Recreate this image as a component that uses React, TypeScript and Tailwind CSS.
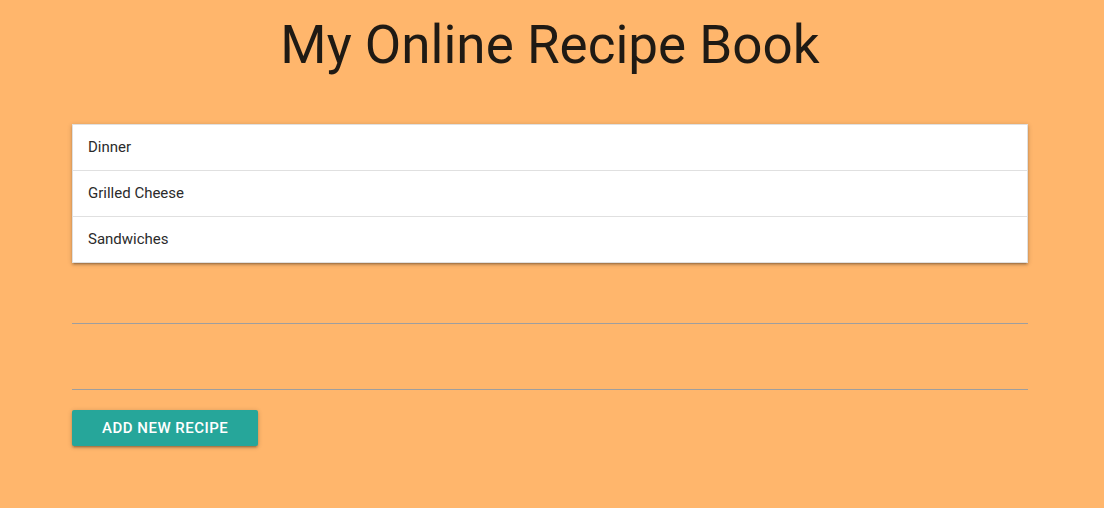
import React from "react";

const recipes = ["Dinner", "Grilled Cheese", "Sandwiches"];

export default function App() {
  return (
    <div className="min-h-[508px] bg-[#ffb66c] font-['Roboto',sans-serif]">
      <div className="ml-[72px] w-[956px] pt-[13px]">
        <h1 className="text-center text-[53px] font-normal leading-[64px] text-[#1f1a14]">
          My Online Recipe Book
        </h1>

        <ul className="mt-[47px] border border-[#e0e0e0] bg-white shadow-[0_2px_2px_0_rgba(0,0,0,0.14),0_3px_1px_-2px_rgba(0,0,0,0.12),0_1px_5px_0_rgba(0,0,0,0.2)]">
          {recipes.map((name, i) => (
            <li
              key={name}
              className={`pl-[15px] pt-[10px] pb-[11px] text-[15px] leading-6 text-[#2b2b2b] ${
                i < recipes.length - 1 ? "border-b border-[#e0e0e0]" : ""
              }`}
            >
              {name}
            </li>
          ))}
        </ul>

        <div className="mt-[15px] h-[46px] border-b border-[#9e9e9e]" />
        <div className="mt-[20px] h-[46px] border-b border-[#9e9e9e]" />

        <button className="mt-[20px] h-9 rounded-[2px] bg-[#26a69a] px-[30px] text-[15px] font-medium uppercase tracking-[0.5px] text-white shadow-[0_2px_2px_0_rgba(0,0,0,0.14),0_3px_1px_-2px_rgba(0,0,0,0.12),0_1px_5px_0_rgba(0,0,0,0.2)]">
          Add New Recipe
        </button>
      </div>
    </div>
  );
}
